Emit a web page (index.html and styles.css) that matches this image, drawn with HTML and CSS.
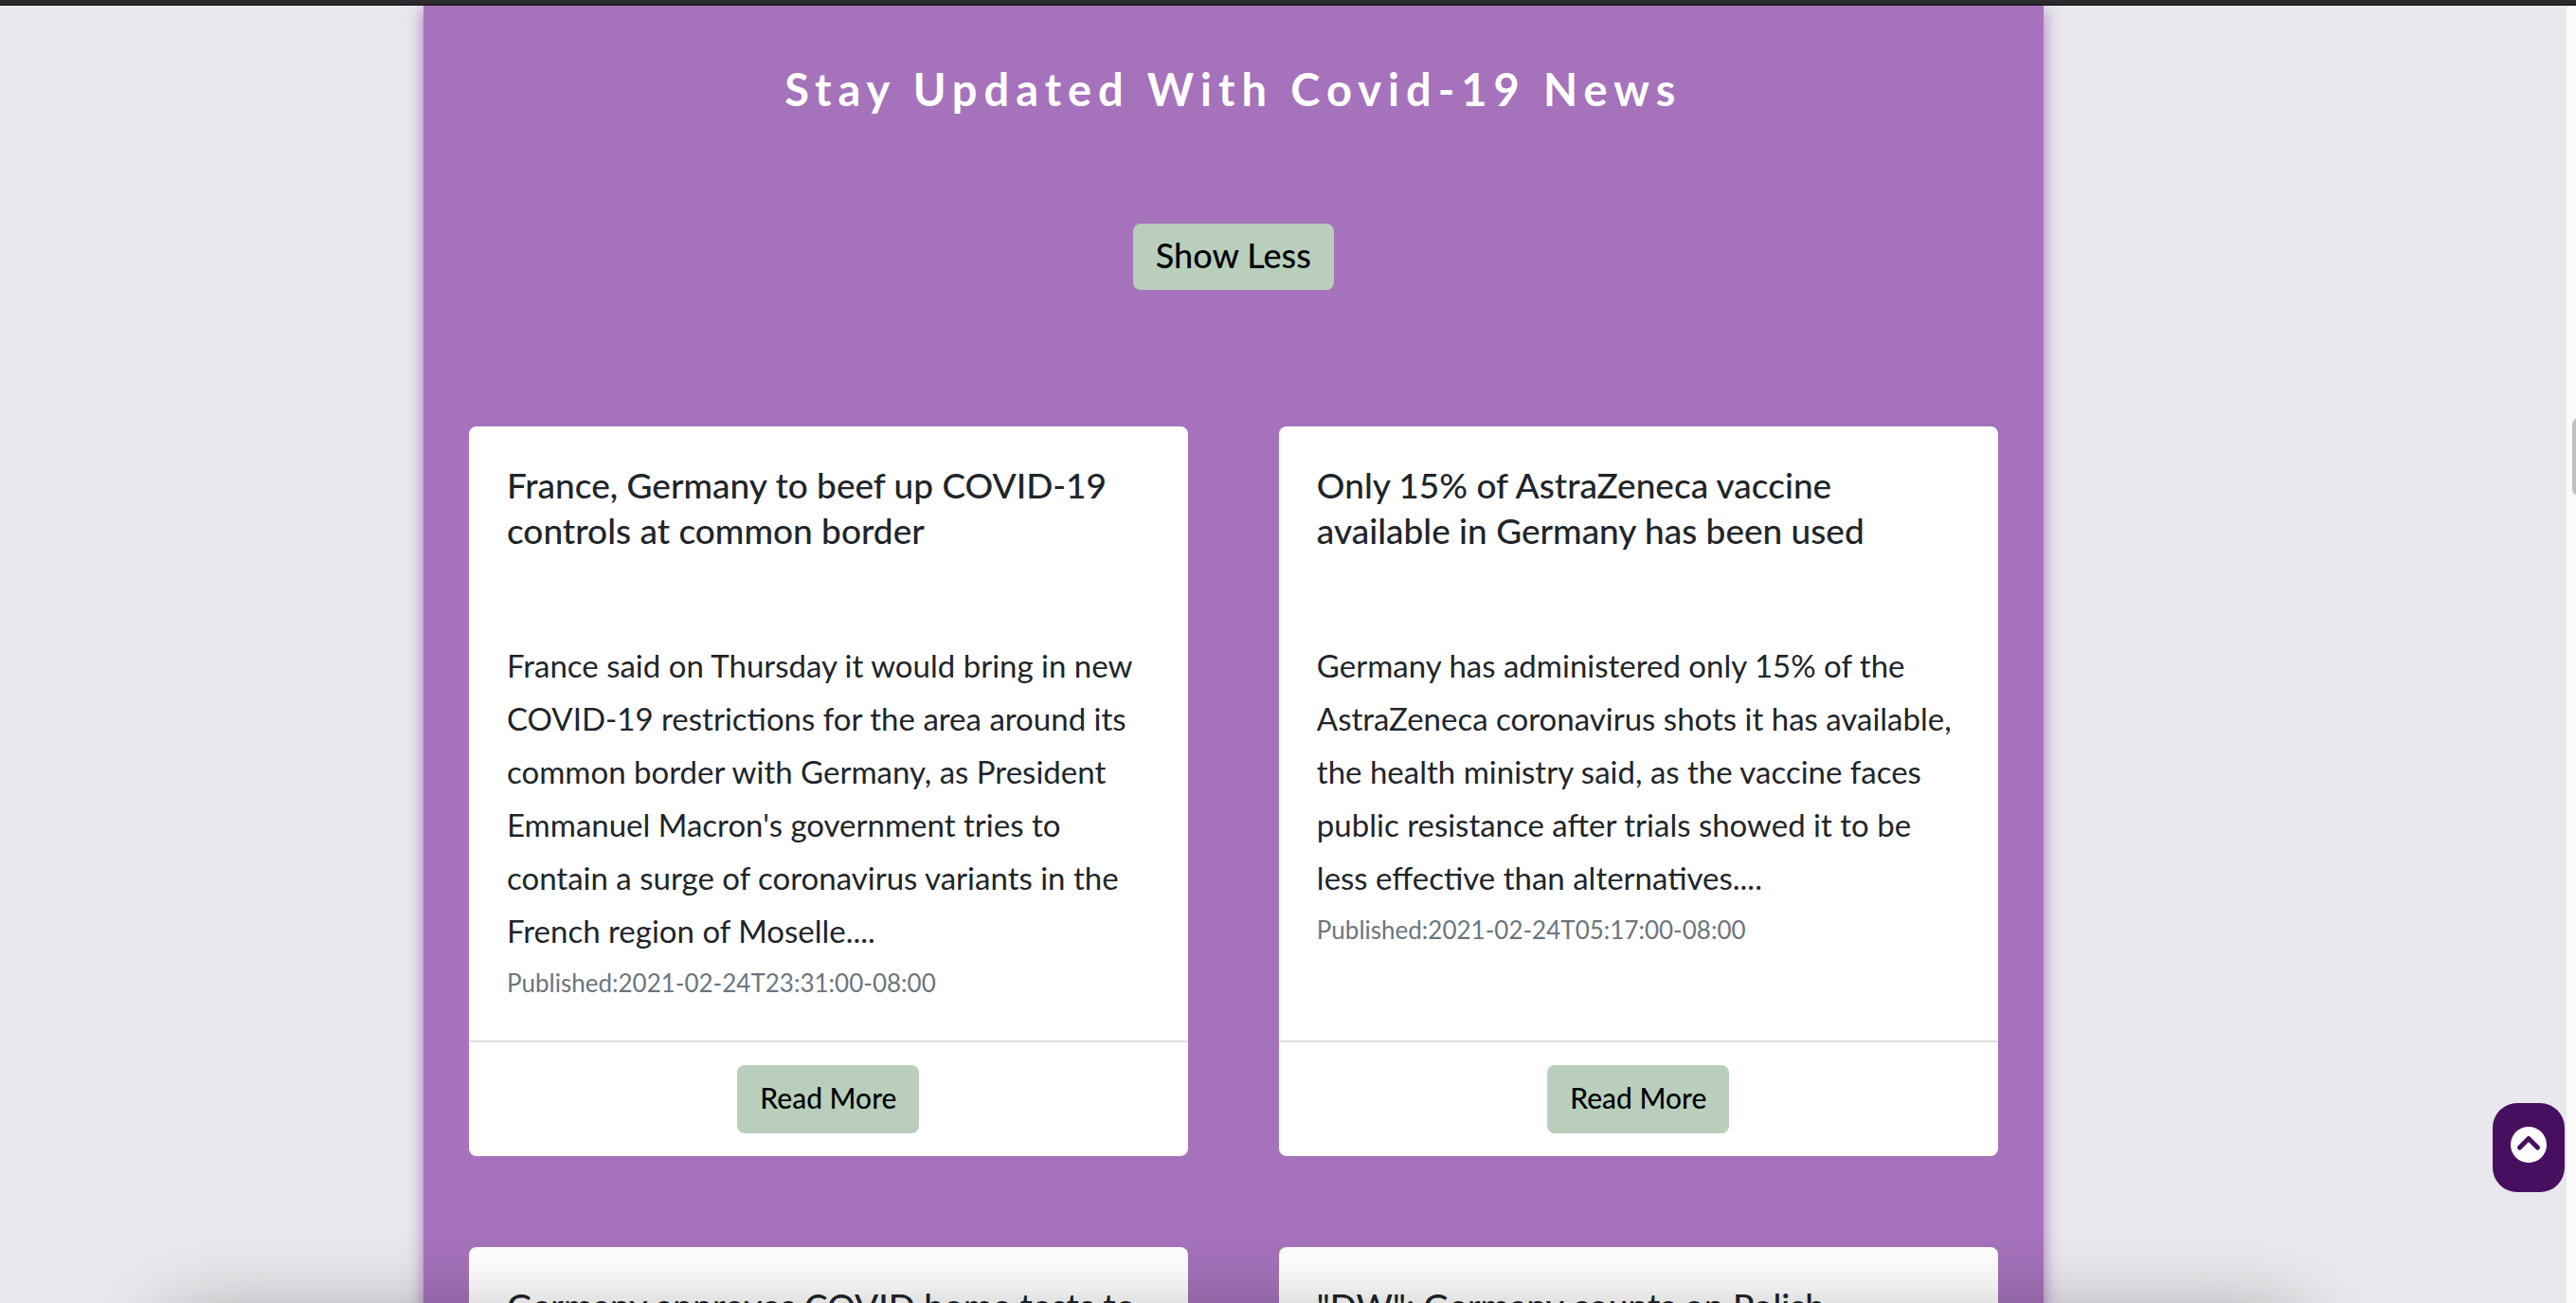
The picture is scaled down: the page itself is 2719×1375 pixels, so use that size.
FILE: index.html
```
<!DOCTYPE html>
<html lang="en">
<head>
  <meta charset="utf-8">
  <meta name="viewport" content="width=device-width, initial-scale=1">
  <title>Covid-19 News</title>
  <link rel="stylesheet" href="styles.css">
</head>
<body>
  <div class="top-bar"></div>

  <main class="news">
    <h1 class="news-title">Stay Updated With Covid-19 News</h1>
    <button class="btn btn-toggle" type="button">Show Less</button>

    <div class="news-grid">
      <article class="card">
        <div class="card-body">
          <h2 class="card-title">France, Germany to beef up COVID-19 controls at common border</h2>
          <p class="card-text">France said on Thursday it would bring in new COVID-19 restrictions for the area around its common border with Germany, as President Emmanuel Macron's government tries to contain a surge of coronavirus variants in the French region of Moselle....</p>
          <p class="card-date">Published:2021-02-24T23:31:00-08:00</p>
        </div>
        <div class="card-footer"><a class="btn" href="#">Read More</a></div>
      </article>

      <article class="card">
        <div class="card-body">
          <h2 class="card-title">Only 15% of AstraZeneca vaccine available in Germany has been used</h2>
          <p class="card-text">Germany has administered only 15% of the AstraZeneca coronavirus shots it has available, the health ministry said, as the vaccine faces public resistance after trials showed it to be less effective than alternatives....</p>
          <p class="card-date">Published:2021-02-24T05:17:00-08:00</p>
        </div>
        <div class="card-footer"><a class="btn" href="#">Read More</a></div>
      </article>

      <article class="card">
        <div class="card-body">
          <h2 class="card-title">Germany approves COVID home tests to</h2>
        </div>
      </article>

      <article class="card">
        <div class="card-body">
          <h2 class="card-title">"DW": Germany counts on Polish</h2>
        </div>
      </article>
    </div>
  </main>

  <button class="to-top" type="button" aria-label="Back to top">
    <svg class="to-top-icon" viewBox="0 0 38 38" aria-hidden="true">
      <circle cx="19" cy="19" r="19" fill="#fff"/>
      <path d="M9.500 22 19 12.500 28.500 22" fill="none" stroke="#480f60" stroke-width="5" stroke-linecap="round" stroke-linejoin="round"/>
    </svg>
  </button>

  <div class="scroll-track"><div class="scroll-thumb"></div></div>
  <div class="bottom-shade"></div>
</body>
</html>
```
FILE: styles.css
```
* {
  box-sizing: border-box;
}

body {
  margin: 0;
  height: 100vh;
  overflow: hidden;
  background: #e9e8ec;
  color: #212529;
  font-family: Lato, "Noto Sans", sans-serif;
}

h1,
h2,
p {
  margin: 0;
}

.top-bar {
  position: relative;
  z-index: 1;
  height: 6px;
  background: #2c2c2c;
  border-bottom: 2px solid #231c26;
}

/* News section */

.news {
  display: flex;
  flex-direction: column;
  align-items: center;
  width: 62.88%;
  min-height: 100vh;
  margin-left: 16.44%;
  padding: 58px 48px;
  background: #a572bb;
  box-shadow: 0 4px 16px #a572bb;
}

.news-title {
  color: #fff;
  font-size: 47px;
  font-weight: 700;
  line-height: 60px;
  letter-spacing: 7px;
  text-align: center;
}

.btn {
  display: block;
  padding: 0 24px 4px;
  border: 0;
  border-radius: 8px;
  background: #b9cfbc;
  color: #000;
  font-family: inherit;
  font-size: 30px;
  font-weight: 500;
  line-height: 68px;
  text-decoration: none;
}

.btn-toggle {
  margin: 112px 0 144px;
  font-size: 36px;
  line-height: 66px;
}

.news-grid {
  display: grid;
  grid-template-columns: 1fr 1fr;
  gap: 96px;
  width: 100%;
}

/* Cards */

.card {
  display: flex;
  flex-direction: column;
  border-radius: 8px;
  background: #fff;
}

.card-body {
  flex: 1;
  padding: 38px 40px 34px;
}

.card-title {
  min-height: 186px;
  font-size: 37px;
  font-weight: 500;
  line-height: 48px;
}

.card-text {
  font-size: 33px;
  line-height: 56px;
}

.card-date {
  color: #6c757d;
  font-size: 26px;
  line-height: 54px;
}

.card-footer {
  display: flex;
  justify-content: center;
  padding: 24px;
  border-top: 2px solid #dfdfdf;
}

/* Floating controls */

.to-top {
  position: fixed;
  right: 12px;
  bottom: 117px;
  width: 76px;
  height: 94px;
  padding: 0 0 6px;
  border: 0;
  border-radius: 26px;
  background: #480f60;
}

.to-top-icon {
  display: block;
  width: 38px;
  height: 38px;
  margin: 0 auto;
}

.scroll-track {
  position: fixed;
  top: 6px;
  right: 0;
  bottom: 0;
  width: 10px;
  overflow: hidden;
  background: #fafafa;
}

.scroll-thumb {
  width: 14px;
  height: 82px;
  margin: 435px 0 0 6px;
  border-radius: 7px;
  background: #c1c1c1;
}

.bottom-shade {
  position: fixed;
  top: 100%;
  right: 292px;
  left: 176px;
  height: 200px;
  margin-top: 24px;
  border-radius: 20px;
  box-shadow: 0 0 90px rgba(0, 0, 0, 0.4);
}
```
